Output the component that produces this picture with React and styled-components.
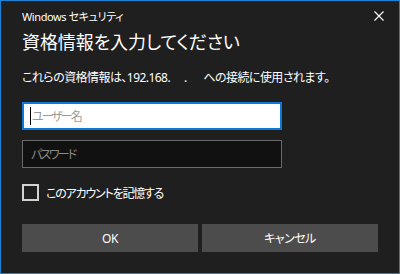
import React from "react";
import styled, { createGlobalStyle } from "styled-components";

const GlobalStyle = createGlobalStyle`
  html, body {
    margin: 0;
    padding: 0;
    background: #1f1f1f;
  }
  body {
    font-family: "Noto Sans", "Noto Sans CJK JP", sans-serif;
    color: #fff;
  }
`;

const Window = styled.div`
  box-sizing: border-box;
  width: 400px;
  height: 274px;
  border: 1px solid #1883d7;
  background-color: #1f1f1f;
  padding: 0 21px;
  display: flex;
  flex-direction: column;
  overflow: hidden;
`;

const TitleBar = styled.div`
  height: 29px;
  display: flex;
  align-items: center;
  justify-content: space-between;
  margin-right: -6px;
`;

const TitleText = styled.span`
  font-size: 11px;
  color: #fff;
  letter-spacing: -0.4px;
  font-feature-settings: "palt";
`;

const CloseButton = styled.div`
  width: 10px;
  height: 10px;
  display: flex;
  align-items: center;
  justify-content: center;
  margin-top: 1px;
`;

const Heading = styled.h1`
  margin: 0;
  font-size: 18px;
  font-weight: 400;
  line-height: 24px;
  height: 24px;
  color: #fff;
  font-feature-settings: "palt";
  letter-spacing: -0.1px;
`;

const Message = styled.p`
  margin: 15px 0 0;
  font-size: 12px;
  line-height: 18px;
  height: 18px;
  color: #fff;
  white-space: pre;
  letter-spacing: -0.55px;
  font-feature-settings: "palt";
`;

const Field = styled.div`
  box-sizing: border-box;
  width: 260px;
  height: 28px;
  margin-top: ${({ gap }) => gap}px;
  display: flex;
  align-items: center;
  padding-left: ${({ focused }) => (focused ? "6px" : "8px")};
  background-color: ${({ focused }) => (focused ? "#fff" : "#111111")};
  border: ${({ focused }) => (focused ? "2px solid #0a78d7" : "1px solid #6a6a6a")};
`;

const Caret = styled.span`
  width: 1px;
  height: 18px;
  margin-right: 1px;
  background: #000;
`;

const Placeholder = styled.span`
  font-size: 12px;
  color: ${({ dark }) => (dark ? "#8a8a8a" : "#9a9a9a")};
  letter-spacing: -2px;
  font-feature-settings: "palt";
`;

const CheckRow = styled.label`
  margin-top: 16px;
  height: 17px;
  display: flex;
  align-items: center;
  gap: 7px;
`;

const CheckBox = styled.span`
  box-sizing: border-box;
  width: 17px;
  height: 17px;
  border: 2px solid #d2d2d2;
`;

const CheckLabel = styled.span`
  font-size: 12px;
  color: #fff;
  letter-spacing: -1.2px;
  font-feature-settings: "palt";
`;

const ButtonRow = styled.div`
  margin-top: 23px;
  display: grid;
  grid-template-columns: 1fr 1fr;
  gap: 4px;
`;

const Button = styled.button`
  height: 28px;
  border: none;
  background-color: #4c4c4c;
  color: #fff;
  font-family: inherit;
  font-size: 12px;
  letter-spacing: -0.5px;
  font-feature-settings: "palt";
  padding: 0;
`;

export default function App() {
  return (
    <>
      <GlobalStyle />
      <Window>
        <TitleBar>
          <TitleText>Windows セキュリティ</TitleText>
          <CloseButton>
            <svg width="10" height="10" viewBox="0 0 10 10">
              <path d="M0.5 0.5 L9.5 9.5 M9.5 0.5 L0.5 9.5" stroke="#fff" strokeWidth="1.1" />
            </svg>
          </CloseButton>
        </TitleBar>
        <Heading>資格情報を入力してください</Heading>
        <Message>これらの資格情報は、192.168.　 .　  への接続に使用されます。</Message>
        <Field focused gap={15}>
          <Caret />
          <Placeholder>ユーザー名</Placeholder>
        </Field>
        <Field gap={10}>
          <Placeholder dark>パスワード</Placeholder>
        </Field>
        <CheckRow>
          <CheckBox />
          <CheckLabel>このアカウントを記憶する</CheckLabel>
        </CheckRow>
        <ButtonRow>
          <Button>OK</Button>
          <Button>キャンセル</Button>
        </ButtonRow>
      </Window>
    </>
  );
}
